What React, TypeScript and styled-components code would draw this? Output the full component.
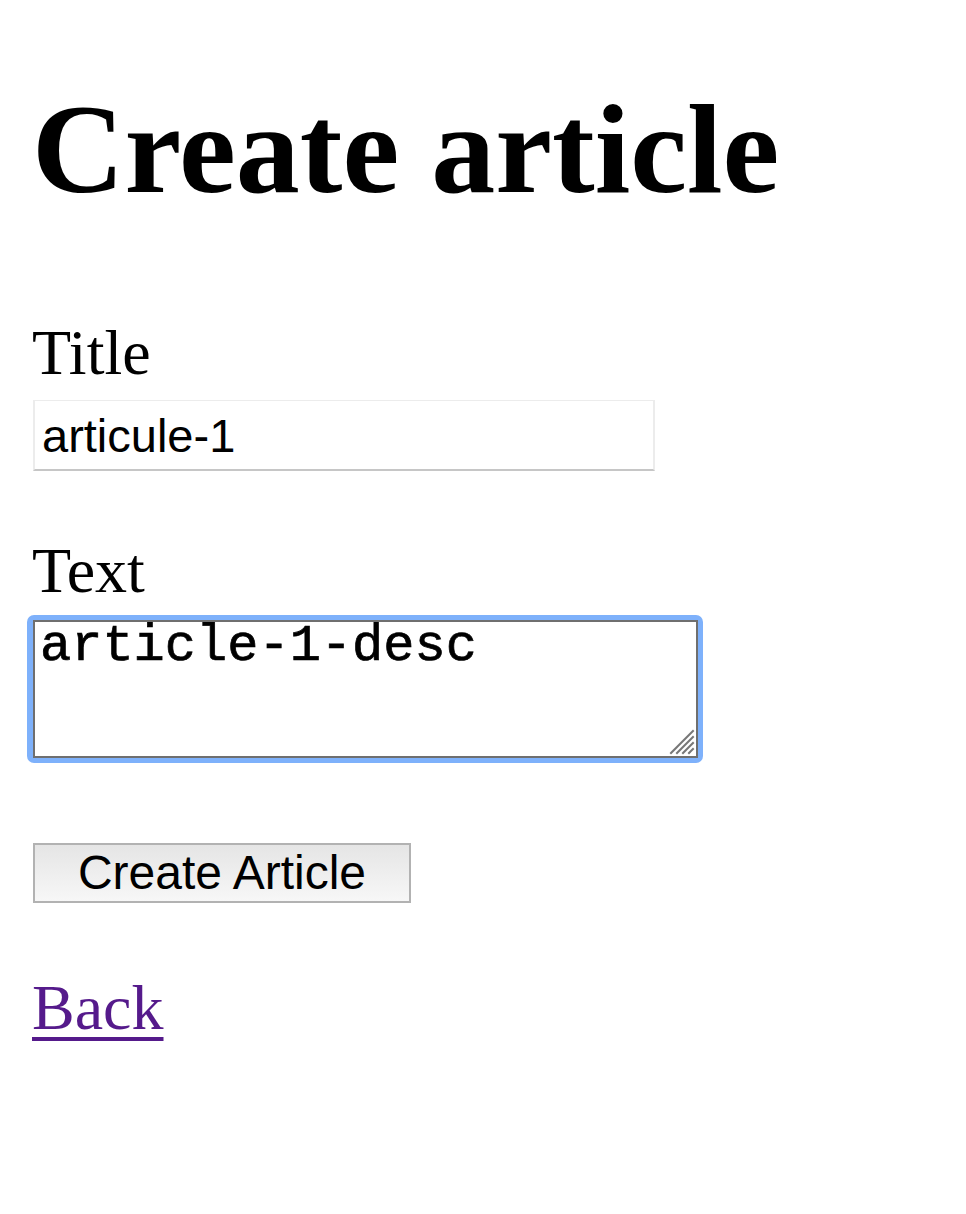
import React from 'react';
import styled, { createGlobalStyle } from 'styled-components';

const GlobalStyle = createGlobalStyle`
  html, body {
    margin: 0;
    padding: 0;
    background: #ffffff;
  }
  body {
    font-family: "Liberation Serif", "Times New Roman", serif;
    color: #000000;
  }
`;

const Page = styled.div`
  display: flex;
  flex-direction: column;
  align-items: flex-start;
  padding: 85px 32px 0;
`;

const Heading = styled.h1`
  margin: 0;
  font-size: 128px;
  line-height: 128px;
  font-weight: bold;
`;

const Form = styled.form`
  display: flex;
  flex-direction: column;
  align-items: flex-start;
  margin-top: 103px;
`;

const Field = styled.div`
  display: flex;
  flex-direction: column;
  align-items: flex-start;
  gap: ${({ gap }: { gap: number }) => gap}px;
  & + & {
    margin-top: 63px;
  }
`;

const Label = styled.label`
  font-size: 64px;
  line-height: 74px;
`;

const TextInput = styled.input`
  box-sizing: border-box;
  width: 622px;
  height: 71px;
  margin: 0 0 0 1px;
  padding: 0 0 0 7px;
  border: 2px solid #ececec;
  border-bottom-color: #c6c6c6;
  border-top-width: 1px;
  background: #ffffff;
  font-family: "Liberation Sans", Arial, sans-serif;
  font-size: 47px;
  color: #000000;
  outline: none;
`;

const FocusRing = styled.div`
  position: relative;
  margin-left: -5px;
  padding: 5px 5px 5px 6px;
  border-radius: 7px;
  background: #7eb1fb;
  line-height: 0;
`;

const TextArea = styled.textarea`
  box-sizing: border-box;
  display: block;
  width: 665px;
  height: 138px;
  margin: 0;
  padding: 0 5px;
  border: 2px solid #6f6f6f;
  border-radius: 0;
  background: #ffffff;
  font-family: "Liberation Mono", "Courier New", monospace;
  font-size: 52px;
  line-height: 50px;
  color: #000000;
  -webkit-text-stroke: 0.7px #000000;
  resize: none;
  outline: none;
`;

const Grip = styled.svg`
  position: absolute;
  right: 8px;
  bottom: 8px;
  width: 26px;
  height: 26px;
  pointer-events: none;
`;

const Actions = styled.div`
  margin-top: 80px;
`;

const SubmitButton = styled.button`
  box-sizing: border-box;
  width: 378px;
  height: 60px;
  margin: 0 0 0 1px;
  padding: 0;
  border: 2px solid #b2b2b2;
  border-radius: 0;
  background: linear-gradient(#e5e5e5, #f7f7f7);
  font-family: "Liberation Sans", Arial, sans-serif;
  font-size: 48px;
  line-height: 56px;
  color: #000000;
`;

const BackLink = styled.a`
  margin-top: 68px;
  font-size: 64px;
  line-height: 74px;
  color: #551a8b;
  text-decoration: underline;
  text-decoration-thickness: 4px;
  text-underline-offset: 8px;
`;

const App = () => (
  <>
    <GlobalStyle />
    <Page>
      <Heading>Create article</Heading>
      <Form onSubmit={(e) => e.preventDefault()}>
        <Field gap={10}>
          <Label htmlFor="article_title">Title</Label>
          <TextInput id="article_title" type="text" defaultValue="articule-1" />
        </Field>
        <Field gap={7}>
          <Label htmlFor="article_text">Text</Label>
          <FocusRing>
            <TextArea id="article_text" defaultValue="article-1-desc" />
            <Grip viewBox="0 0 26 26">
              <g stroke="#777777" strokeWidth="2" strokeLinecap="square">
                <line x1="2" y1="24" x2="24" y2="2" />
                <line x1="8" y1="24" x2="24" y2="8" />
                <line x1="14" y1="24" x2="24" y2="14" />
                <line x1="20" y1="24" x2="24" y2="20" />
              </g>
            </Grip>
          </FocusRing>
        </Field>
        <Actions>
          <SubmitButton type="submit">Create Article</SubmitButton>
        </Actions>
      </Form>
      <BackLink href="#">Back</BackLink>
    </Page>
  </>
);

export default App;
